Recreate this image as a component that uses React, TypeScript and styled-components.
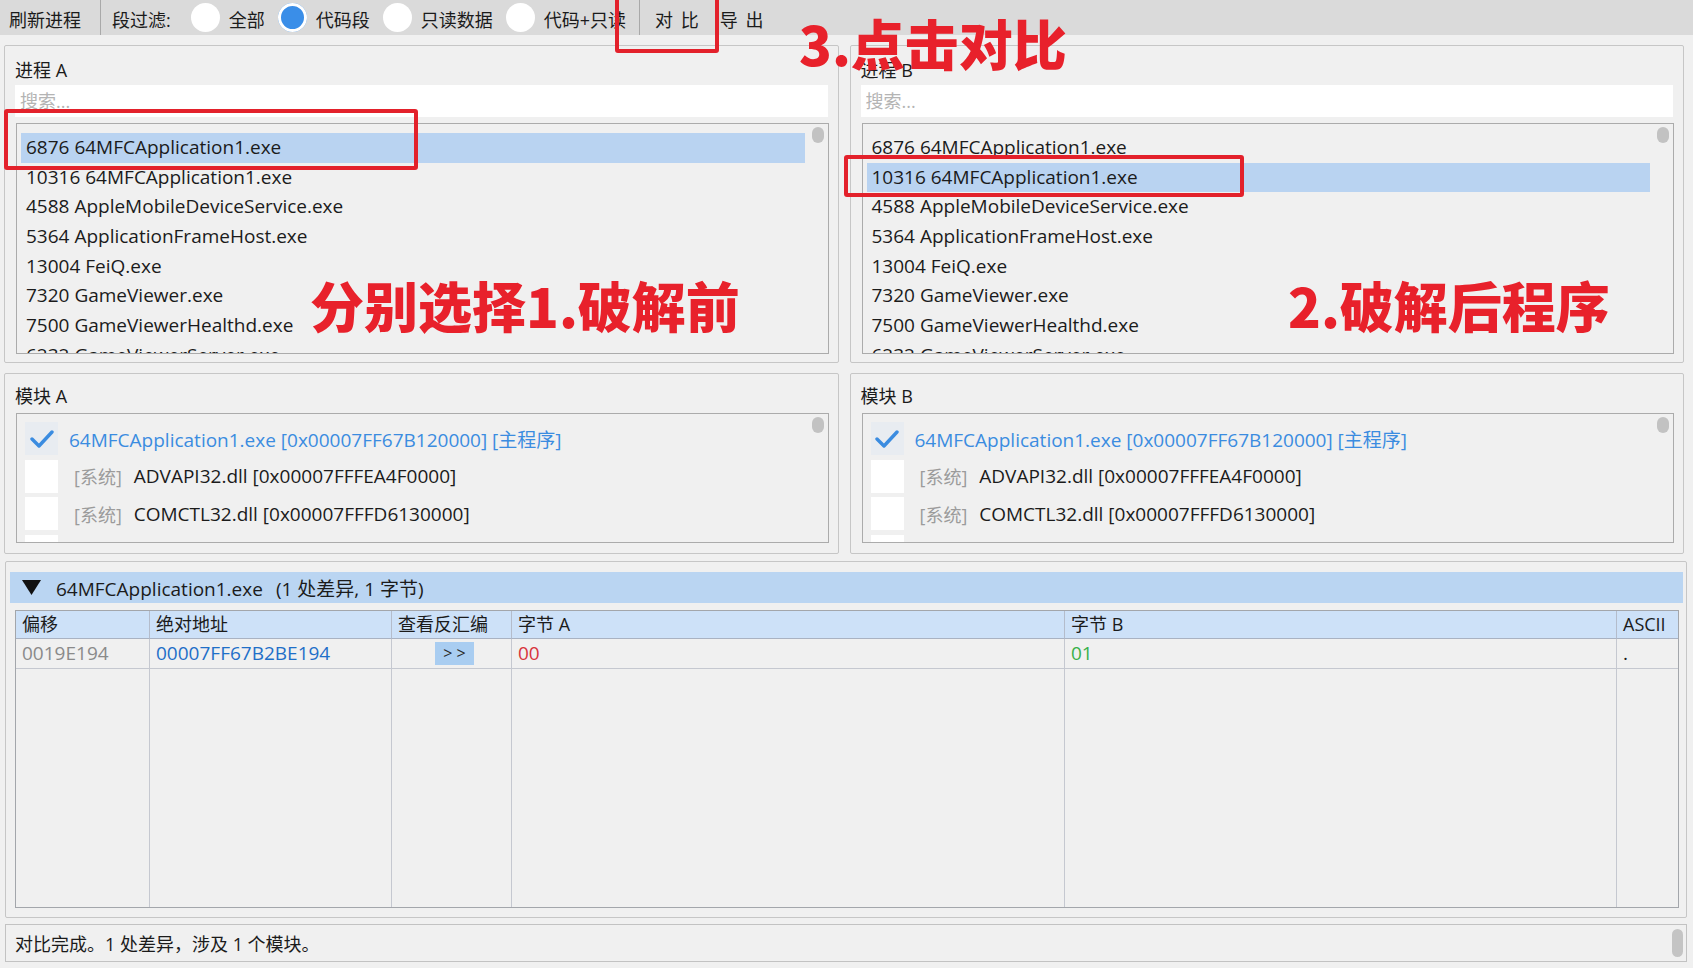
import styled, { createGlobalStyle } from "styled-components";

const GlobalStyle = createGlobalStyle`
  html, body {
    margin: 0;
    padding: 0;
  }
  body {
    width: 1693px;
    height: 968px;
    overflow: hidden;
    background: #f0f0f0;
    font-family: "Open Sans", "Noto Sans CJK SC", sans-serif;
    font-size: 18px;
    color: #1b1b1b;
  }
`;

const Window = styled.div`
  position: relative;
  width: 1693px;
  height: 968px;
  display: flex;
  flex-direction: column;
  overflow: hidden;
`;

/* ---------- toolbar ---------- */

const Toolbar = styled.div`
  height: 35px;
  flex: none;
  box-sizing: border-box;
  background: #dadada;
  display: flex;
  align-items: center;
  padding: 2px 0 0 9px;
  white-space: nowrap;
`;

const ToolText = styled.span<{ $mr?: number }>`
  margin-right: ${(p) => p.$mr ?? 0}px;
`;

const ToolSep = styled.div<{ $l: number; $r: number }>`
  width: 1px;
  height: 35px;
  margin-top: -2px;
  background: #a9a9a9;
  margin-left: ${(p) => p.$l}px;
  margin-right: ${(p) => p.$r}px;
`;

const RadioOption = styled.label<{ $mr?: number }>`
  display: flex;
  align-items: center;
  gap: 9px;
  margin-right: ${(p) => p.$mr ?? 13}px;
`;

const RadioDot = styled.span<{ $on?: boolean }>`
  width: 29px;
  height: 29px;
  margin-top: -2px;
  border-radius: 50%;
  background: ${(p) => (p.$on ? "#3a8ee8" : "#fff")};
  box-shadow: ${(p) => (p.$on ? "inset 0 0 0 3px #fff" : "none")};
`;

const ToolButton = styled.span<{ $ml: number }>`
  margin-left: ${(p) => p.$ml}px;
  word-spacing: 3px;
`;

/* ---------- main body ---------- */

const Body = styled.div`
  flex: 1;
  display: flex;
  flex-direction: column;
  padding: 10px 6px 6px 4px;
  min-height: 0;
`;

const Pair = styled.div<{ $h: number; $mb: number }>`
  display: grid;
  grid-template-columns: 1fr 1fr;
  grid-template-rows: minmax(0, 1fr);
  column-gap: 11px;
  height: ${(p) => p.$h}px;
  margin-right: 3px;
  margin-bottom: ${(p) => p.$mb}px;
  flex: none;
`;

const Group = styled.section<{ $pb: number }>`
  box-sizing: border-box;
  border: 1px solid #c6c6c6;
  border-radius: 2px;
  padding: 0 10px ${(p) => p.$pb}px 10px;
  display: flex;
  flex-direction: column;
  min-width: 0;
  min-height: 0;
  overflow: hidden;
`;

const GroupTitle = styled.div<{ $pt: number }>`
  height: 39px;
  box-sizing: border-box;
  padding-top: ${(p) => p.$pt}px;
  line-height: 24px;
  flex: none;
`;

const SearchInput = styled.input`
  height: 32px;
  flex: none;
  box-sizing: border-box;
  border: none;
  outline: none;
  background: #fff;
  padding: 0 5px;
  font: inherit;
  color: #1b1b1b;
  &::placeholder {
    color: #b4b4b4;
  }
`;

const ListBox = styled.div<{ $mt: number; $pt: number }>`
  position: relative;
  flex: 1;
  margin-top: ${(p) => p.$mt}px;
  margin-left: 1px;
  margin-right: -1px;
  border: 1px solid #ababab;
  padding: ${(p) => p.$pt}px 23px 0 4px;
  overflow: hidden;
  min-height: 0;
`;

const ScrollThumb = styled.span`
  position: absolute;
  top: 3px;
  right: 4px;
  width: 12px;
  height: 16px;
  border-radius: 6px;
  background: #c2c2c2;
`;

const ProcRow = styled.div<{ $sel?: boolean }>`
  height: 29.7px;
  line-height: 29.7px;
  padding-left: 5px;
  font-size: 19px;
  white-space: nowrap;
  background: ${(p) => (p.$sel ? "#b9d3f1" : "transparent")};
`;

const ModRow = styled.div`
  height: 37.5px;
  display: flex;
  align-items: center;
  padding-left: 4px;
  font-size: 19px;
  white-space: nowrap;
`;

const CheckBox = styled.span<{ $on?: boolean }>`
  width: 33px;
  height: 33px;
  flex: none;
  display: flex;
  align-items: center;
  justify-content: center;
  background: ${(p) => (p.$on ? "#e8ecf1" : "#fff")};
`;

const ModMain = styled.span`
  margin-left: 11px;
  color: #3b8ce0;
`;

const SysTag = styled.span`
  margin-left: 16px;
  margin-right: 12px;
  font-size: 18px;
  color: #9b9b9b;
`;

/* ---------- diff view ---------- */

const DiffGroup = styled.section`
  height: 357px;
  flex: none;
  box-sizing: border-box;
  border: 1px solid #c6c6c6;
  border-radius: 2px;
  margin-left: 1px;
  margin-bottom: 6px;
  padding: 10px 3px 9px 4px;
  display: flex;
  flex-direction: column;
`;

const DiffHeader = styled.div`
  height: 31px;
  flex: none;
  background: #bad5f2;
  display: flex;
  align-items: center;
  padding-left: 12px;
  gap: 15px;
  font-size: 19px;
  white-space: nowrap;
`;

const DiffSummary = styled.span`
  margin-left: -1px;
  padding-left: 14px;
`;

const DiffTable = styled.div`
  flex: 1;
  margin: 7px 4px 0 5px;
  border: 1px solid #a3a6ab;
  display: grid;
  grid-template-columns: 134px 242px 120px 553px 552px 1fr;
  grid-template-rows: 28px 30px 1fr;
  min-height: 0;
`;

const HeadCell = styled.div<{ $last?: boolean }>`
  background: #cde1f8;
  border-right: ${(p) => (p.$last ? "none" : "1px solid #b4bccb")};
  border-bottom: 1px solid #a9b2c2;
  padding-left: 6px;
  line-height: 27px;
  white-space: nowrap;
  overflow: hidden;
`;

const Cell = styled.div<{ $color?: string; $last?: boolean; $center?: boolean }>`
  border-right: ${(p) => (p.$last ? "none" : "1px solid #c5c8d0")};
  border-bottom: 1px solid #c5c8d0;
  padding-left: 6px;
  font-size: 19px;
  line-height: 29px;
  color: ${(p) => p.$color ?? "#1b1b1b"};
  display: flex;
  align-items: center;
  justify-content: ${(p) => (p.$center ? "center" : "flex-start")};
  white-space: nowrap;
`;

const FillCell = styled.div<{ $last?: boolean }>`
  border-right: ${(p) => (p.$last ? "none" : "1px solid #c5c8d0")};
`;

const JumpButton = styled.span`
  width: 39px;
  height: 23px;
  background: #a9cdf1;
  color: #2a2a2a;
  font-size: 16px;
  line-height: 23px;
  text-align: center;
  white-space: pre;
`;

/* ---------- status bar ---------- */

const StatusBar = styled.div`
  height: 38px;
  flex: none;
  box-sizing: border-box;
  margin-left: 1px;
  border: 1px solid #c2c2c2;
  display: flex;
  align-items: center;
  justify-content: space-between;
  padding: 0 3px 0 9px;
`;

const StatusThumb = styled.span`
  width: 11px;
  height: 28px;
  border-radius: 6px;
  background: #c4c4c4;
`;

/* ---------- red annotations drawn on top ---------- */

const Mark = styled.div<{ $x: number; $y: number; $w: number; $h: number }>`
  position: absolute;
  left: ${(p) => p.$x}px;
  top: ${(p) => p.$y}px;
  width: ${(p) => p.$w}px;
  height: ${(p) => p.$h}px;
  box-sizing: border-box;
  border: 4px solid #e3212b;
  border-radius: 3px;
  pointer-events: none;
`;

const Note = styled.div<{ $x: number; $y: number }>`
  position: absolute;
  left: ${(p) => p.$x}px;
  top: ${(p) => p.$y}px;
  font-family: "Noto Sans CJK SC", sans-serif;
  font-weight: 900;
  font-size: 54px;
  line-height: 54px;
  color: #e8212b;
  white-space: nowrap;
  pointer-events: none;
`;

const processes = [
  "6876 64MFCApplication1.exe",
  "10316 64MFCApplication1.exe",
  "4588 AppleMobileDeviceService.exe",
  "5364 ApplicationFrameHost.exe",
  "13004 FeiQ.exe",
  "7320 GameViewer.exe",
  "7500 GameViewerHealthd.exe",
  "6232 GameViewerServer.exe",
];

const modules = [
  { name: "ADVAPI32.dll [0x00007FFFEA4F0000]" },
  { name: "COMCTL32.dll [0x00007FFFD6130000]" },
  { name: "" },
];

function CheckMark() {
  return (
    <svg width="24" height="20" viewBox="0 0 24 20">
      <polyline
        points="2,10 9,17 22,3"
        fill="none"
        stroke="#3b8ce0"
        strokeWidth="3.4"
        strokeLinecap="round"
        strokeLinejoin="round"
      />
    </svg>
  );
}

function ProcessPanel({ title, selected }: { title: string; selected: number }) {
  return (
    <Group $pb={8}>
      <GroupTitle $pt={12}>{title}</GroupTitle>
      <SearchInput placeholder="搜索..." readOnly />
      <ListBox $mt={6} $pt={9}>
        {processes.map((p, i) => (
          <ProcRow key={p} $sel={i === selected}>
            {p}
          </ProcRow>
        ))}
        <ScrollThumb />
      </ListBox>
    </Group>
  );
}

function ModulePanel({ title }: { title: string }) {
  return (
    <Group $pb={10}>
      <GroupTitle $pt={10}>{title}</GroupTitle>
      <ListBox $mt={0} $pt={6}>
        <ModRow>
          <CheckBox $on>
            <CheckMark />
          </CheckBox>
          <ModMain>64MFCApplication1.exe [0x00007FF67B120000] [主程序]</ModMain>
        </ModRow>
        {modules.map((m, i) => (
          <ModRow key={i}>
            <CheckBox />
            {m.name && (
              <>
                <SysTag>[系统]</SysTag>
                <span>{m.name}</span>
              </>
            )}
          </ModRow>
        ))}
        <ScrollThumb />
      </ListBox>
    </Group>
  );
}

export default function App() {
  return (
    <>
      <GlobalStyle />
      <Window>
        <Toolbar>
          <ToolText>刷新进程</ToolText>
          <ToolSep $l={19} $r={11} />
          <ToolText $mr={20}>段过滤:</ToolText>
          <RadioOption>
            <RadioDot />
            全部
          </RadioOption>
          <RadioOption>
            <RadioDot $on />
            代码段
          </RadioOption>
          <RadioOption>
            <RadioDot />
            只读数据
          </RadioOption>
          <RadioOption $mr={0}>
            <RadioDot />
            代码+只读
          </RadioOption>
          <ToolSep $l={13} $r={0} />
          <ToolButton $ml={15}>对 比</ToolButton>
          <ToolButton $ml={21}>导 出</ToolButton>
        </Toolbar>

        <Body>
          <Pair $h={318} $mb={10}>
            <ProcessPanel title="进程 A" selected={0} />
            <ProcessPanel title="进程 B" selected={1} />
          </Pair>
          <Pair $h={181} $mb={7}>
            <ModulePanel title="模块 A" />
            <ModulePanel title="模块 B" />
          </Pair>

          <DiffGroup>
            <DiffHeader>
              <svg width="19" height="15" viewBox="0 0 19 15">
                <polygon points="0,0 19,0 9.5,15" fill="#111" />
              </svg>
              <span>
                64MFCApplication1.exe
                <DiffSummary>(1 处差异, 1 字节)</DiffSummary>
              </span>
            </DiffHeader>
            <DiffTable>
              <HeadCell>偏移</HeadCell>
              <HeadCell>绝对地址</HeadCell>
              <HeadCell>查看反汇编</HeadCell>
              <HeadCell>字节 A</HeadCell>
              <HeadCell>字节 B</HeadCell>
              <HeadCell $last>ASCII</HeadCell>

              <Cell $color="#8a8a8a">0019E194</Cell>
              <Cell $color="#1f6fc8">00007FF67B2BE194</Cell>
              <Cell $center>
                <JumpButton>{"> >"}</JumpButton>
              </Cell>
              <Cell $color="#d8353d">00</Cell>
              <Cell $color="#39b14a">01</Cell>
              <Cell $last>.</Cell>

              <FillCell />
              <FillCell />
              <FillCell />
              <FillCell />
              <FillCell />
              <FillCell $last />
            </DiffTable>
          </DiffGroup>

          <StatusBar>
            <span>对比完成。1 处差异，涉及 1 个模块。</span>
            <StatusThumb />
          </StatusBar>
        </Body>

        <Mark $x={615} $y={-5} $w={104} $h={58} />
        <Mark $x={4} $y={109} $w={414} $h={61} />
        <Mark $x={844} $y={155} $w={400} $h={42} />
        <Note $x={799} $y={16}>3.点击对比</Note>
        <Note $x={310} $y={278}>分别选择1.破解前</Note>
        <Note $x={1288} $y={278}>2.破解后程序</Note>
      </Window>
    </>
  );
}
